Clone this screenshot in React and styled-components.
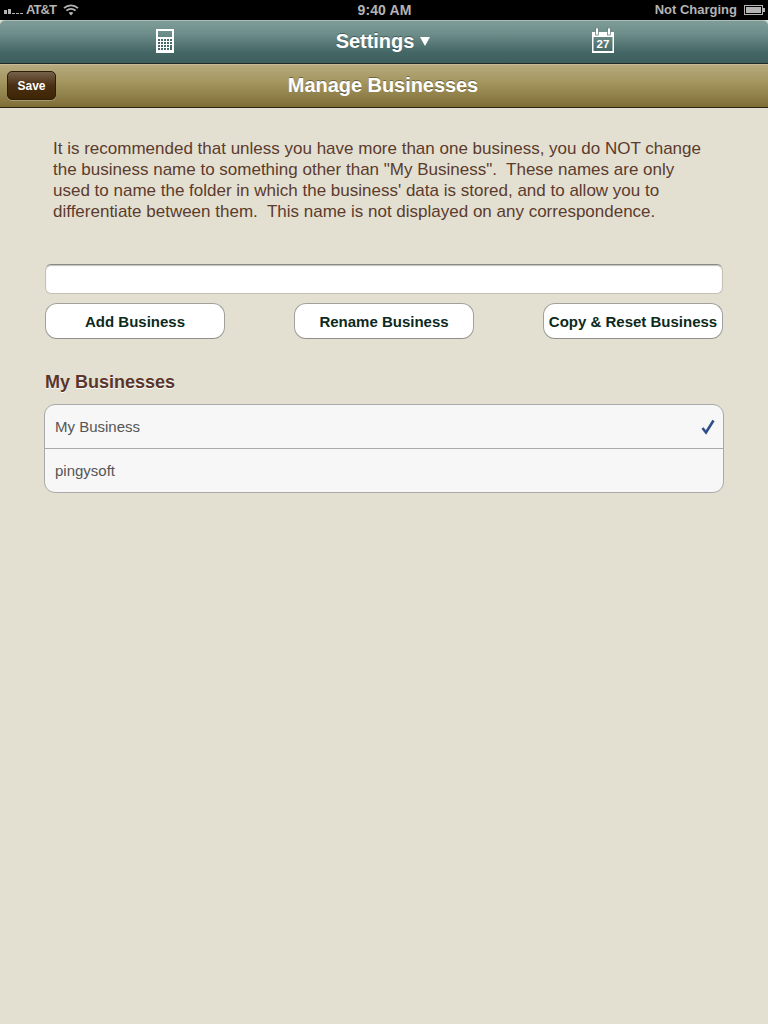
import React from "react";
import styled, { createGlobalStyle } from "styled-components";

const GlobalStyle = createGlobalStyle`
  html, body {
    margin: 0;
    padding: 0;
    background: #e3e0d2;
  }
  body {
    font-family: "Liberation Sans", Arial, sans-serif;
  }
`;

const Page = styled.div`
  width: 768px;
  height: 1024px;
  overflow: hidden;
  display: flex;
  flex-direction: column;
  background: #e3e0d2;
`;

const StatusBar = styled.div`
  height: 20px;
  background: #000;
  color: #b4b4b4;
  font-size: 13px;
  font-weight: 700;
  display: grid;
  grid-template-columns: 1fr auto 1fr;
  align-items: center;
  padding: 0 3px 1px 4px;
  box-sizing: border-box;
`;

const StatusLeft = styled.div`
  display: flex;
  align-items: center;
  gap: 3px;
`;

const StatusRight = styled.div`
  display: flex;
  align-items: center;
  justify-content: flex-end;
  gap: 7px;
`;

const Carrier = styled.span`
  margin-right: 4px;
  letter-spacing: -0.9px;
`;

const Clock = styled.span`
  font-size: 14px;
  letter-spacing: 0.1px;
`;

const TopBar = styled.div`
  height: 44px;
  box-sizing: border-box;
  padding-left: 2px;
  background: linear-gradient(#7f9c98, #6d8e8b 30%, #446664 75%, #3d5e5d);
  border-top: 1px solid #a9bdb9;
  border-bottom: 1px solid #1d2a28;
  border-radius: 5px 5px 0 0;
  display: flex;
  align-items: center;
  justify-content: center;
  gap: 162px;
`;

const BarTitle = styled.div`
  color: #fff;
  font-size: 20px;
  font-weight: 700;
  letter-spacing: -0.05px;
  padding-bottom: 2px;
  text-shadow: 0 -1px 0 rgba(0, 0, 0, 0.35);
  display: flex;
  align-items: center;
  gap: 6px;
`;

const SubBar = styled.div`
  position: relative;
  height: 44px;
  box-sizing: border-box;
  padding-right: 2px;
  background: linear-gradient(#b6aa7f, #a4965f 40%, #7f6d37);
  border-bottom: 1px solid #2a2413;
  border-top: 1px solid #c5bb96;
  display: flex;
  align-items: center;
  justify-content: center;
`;

const SaveButton = styled.button`
  position: absolute;
  left: 7px;
  top: 6px;
  width: 49px;
  height: 29px;
  padding: 0;
  box-sizing: border-box;
  border: 1px solid #2c1c08;
  border-radius: 5px;
  background: linear-gradient(#75604a, #4a3013 50%, #3e2504);
  box-shadow: 0 1px 0 rgba(255, 255, 255, 0.25);
  color: #fff;
  font-family: inherit;
  font-size: 12px;
  font-weight: 700;
`;

const Content = styled.main`
  padding: 30px 45px 0;
`;

const Intro = styled.p`
  margin: 0 0 42px 8px;
  color: #5c3b2c;
  font-size: 17px;
  line-height: 21px;
  white-space: pre;
`;

const NameInput = styled.input`
  display: block;
  width: 678px;
  height: 30px;
  margin: 0;
  padding: 0 8px;
  box-sizing: border-box;
  background: #fff;
  border: 1px solid #c4c1b4;
  border-top-color: #8b8b86;
  box-shadow: inset 0 1px 1px rgba(0, 0, 0, 0.25);
  border-radius: 6px;
  outline: none;
`;

const ButtonRow = styled.div`
  display: flex;
  justify-content: space-between;
  width: 678px;
  margin-top: 9px;
`;

const ActionButton = styled.button`
  width: 180px;
  height: 36px;
  padding: 1px 0 0;
  box-sizing: border-box;
  background: #fff;
  border: 1px solid #a0a09c;
  border-bottom-color: #8f8f8b;
  border-radius: 12px;
  color: #0d2a1c;
  font-family: inherit;
  font-size: 15px;
  font-weight: 700;
  white-space: nowrap;
`;

const SectionTitle = styled.h2`
  margin: 33px 0 12px;
  color: #59352a;
  font-size: 18px;
  line-height: 20px;
  font-weight: 700;
  text-shadow: 0 1px 0 #fff;
`;

const List = styled.ul`
  list-style: none;
  width: 680px;
  margin: 0 0 0 -1px;
  padding: 0;
  box-sizing: border-box;
  background: #f7f7f7;
  border: 1px solid #a9a9a9;
  border-radius: 11px;
`;

const Row = styled.li`
  height: ${(p) => (p.$first ? "43px" : "44px")};
  box-sizing: border-box;
  padding: 0 8px 0 10px;
  display: flex;
  align-items: center;
  justify-content: space-between;
  color: #555;
  font-size: 15px;
  border-top: ${(p) => (p.$first ? "0" : "1px solid #a9a9a9")};
`;

const SignalIcon = () => (
  <svg width="19" height="9" viewBox="0 0 19 9" fill="#b4b4b4">
    <rect x="0" y="5" width="3" height="4" />
    <rect x="4" y="4" width="3" height="5" />
    <rect x="8" y="8" width="3" height="1" />
    <rect x="12" y="8" width="3" height="1" />
    <rect x="16" y="8" width="3" height="1" />
  </svg>
);

const WifiIcon = () => (
  <svg width="16" height="12" viewBox="0 0 16 12" fill="none" stroke="#b4b4b4" strokeWidth="1.8">
    <path d="M1 4.2C5 .4 11 .4 15 4.2" />
    <path d="M3.4 6.6C6 4.2 10 4.2 12.6 6.6" />
    <path d="M8 11.4 5.6 8.8C7 7.6 9 7.6 10.4 8.8Z" fill="#b4b4b4" stroke="none" />
  </svg>
);

const BatteryIcon = () => (
  <svg width="21" height="10" viewBox="0 0 21 10">
    <rect x=".5" y=".5" width="18" height="9" fill="none" stroke="#b4b4b4" />
    <rect x="2" y="2" width="15" height="6" fill="#b4b4b4" />
    <rect x="19" y="3" width="2" height="4" fill="#b4b4b4" />
  </svg>
);

// blank strip at the bottom of both icons lifts them 1px off the bar's centre
const CalculatorIcon = () => (
  <svg width="18" height="26" viewBox="0 0 18 26">
    <path fillRule="evenodd" fill="#fff" d="M0 0h18v24H0ZM2 2v6h14V2Z" />
    <g fill="#47686a">
      {[10, 13, 16, 19].map((y) =>
        [2, 5, 8, 11, 14].map((x) =>
          x === 14 && y === 19 ? null : (
            <rect key={`${x}-${y}`} x={x} y={y} width="2" height={x === 14 && y === 16 ? 5 : 2} />
          )
        )
      )}
    </g>
  </svg>
);

const CalendarIcon = () => (
  <svg width="22" height="28" viewBox="0 0 22 28">
    <path fillRule="evenodd" fill="#fff" d="M0 4h22v21H0ZM1.5 9v14h19V9Z" />
    <rect x="3.5" y="0" width="3" height="7" fill="#fff" stroke="#3f5f5e" strokeWidth=".6" />
    <rect x="15.5" y="0" width="3" height="7" fill="#fff" stroke="#3f5f5e" strokeWidth=".6" />
    <text
      x="11"
      y="20"
      textAnchor="middle"
      fill="#fff"
      fontFamily="Liberation Sans"
      fontWeight="700"
      fontSize="11.5"
    >
      27
    </text>
  </svg>
);

const CheckIcon = () => (
  <svg width="14" height="16" viewBox="0 0 14 16" fill="none" stroke="#2f4f8a" strokeWidth="2.6">
    <path d="M1.5 9 5 13.5 12.5 1.5" />
  </svg>
);

const introText = `It is recommended that unless you have more than one business, you do NOT change
the business name to something other than "My Business".  These names are only
used to name the folder in which the business' data is stored, and to allow you to
differentiate between them.  This name is not displayed on any correspondence.`;

export default function App() {
  return (
    <Page>
      <GlobalStyle />
      <StatusBar>
        <StatusLeft>
          <SignalIcon />
          <Carrier>AT&amp;T</Carrier>
          <WifiIcon />
        </StatusLeft>
        <Clock>9:40 AM</Clock>
        <StatusRight>
          <span>Not Charging</span>
          <BatteryIcon />
        </StatusRight>
      </StatusBar>
      <TopBar>
        <CalculatorIcon />
        <BarTitle>
          Settings
          <svg width="10" height="10" viewBox="0 0 10 10" fill="#fff">
            <path d="M0 1h10L5 10Z" />
          </svg>
        </BarTitle>
        <CalendarIcon />
      </TopBar>
      <SubBar>
        <SaveButton>Save</SaveButton>
        <BarTitle>Manage Businesses</BarTitle>
      </SubBar>
      <Content>
        <Intro>{introText}</Intro>
        <NameInput />
        <ButtonRow>
          <ActionButton>Add Business</ActionButton>
          <ActionButton>Rename Business</ActionButton>
          <ActionButton>Copy &amp; Reset Business</ActionButton>
        </ButtonRow>
        <SectionTitle>My Businesses</SectionTitle>
        <List>
          <Row $first>
            My Business
            <CheckIcon />
          </Row>
          <Row>pingysoft</Row>
        </List>
      </Content>
    </Page>
  );
}
